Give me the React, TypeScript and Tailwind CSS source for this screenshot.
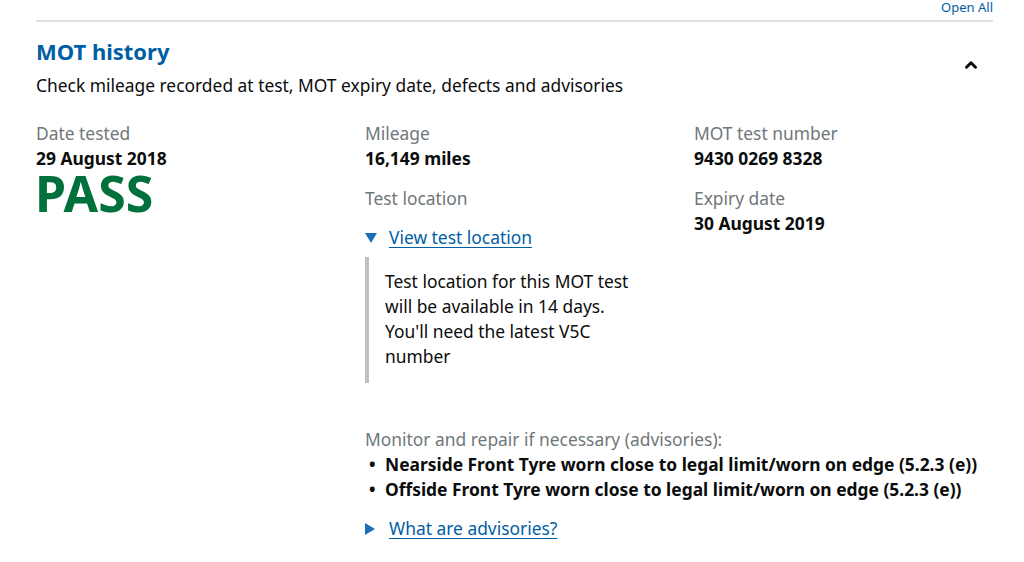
import { ChevronUp } from 'lucide-react';

const font = { fontFamily: '"Noto Sans", Arial, sans-serif' };

function Field({ label, value, className = '' }: { label: string; value: string; className?: string }) {
  return (
    <div className={className}>
      <p className="text-[17.4px] leading-[25px] text-[#6f777b]">{label}</p>
      <p className="text-[17.4px] leading-[25px] font-bold text-[#0b0c0c]">{value}</p>
    </div>
  );
}

export default function App() {
  return (
    <div className="min-h-screen bg-white text-[#0b0c0c]" style={font}>
      <div className="px-[36px] pr-[31px]">
        <div className="flex justify-end h-[22px] border-b-2 border-[#dee0e2]">
          <a className="text-[13px] leading-[14px] text-[#005ea5]">Open All</a>
        </div>

        <div className="flex items-start justify-between pt-[14px]">
          <div>
            <h2 className="text-[22px] leading-[30px] font-bold text-[#005ea5]">MOT history</h2>
            <p className="text-[17.4px] leading-[25px] mt-[7px]">
              Check mileage recorded at test, MOT expiry date, defects and advisories
            </p>
          </div>
          <ChevronUp className="w-[18px] h-[18px] mt-[20px] mr-[13px]" strokeWidth={4} />
        </div>

        <div className="grid grid-cols-[329px_329px_1fr] mt-[23px]">
          <div>
            <Field label="Date tested" value="29 August 2018" />
            <p className="text-[50px] leading-[44px] font-bold text-[#00703c] -ml-[1px]">PASS</p>
          </div>

          <div>
            <Field label="Mileage" value="16,149 miles" />
            <p className="text-[17.4px] leading-[25px] text-[#6f777b] mt-[15px]">Test location</p>
            <div className="flex items-center gap-[12px] mt-[14px]">
              <svg width="12" height="10" viewBox="0 0 12 10" className="shrink-0">
                <path d="M0 0 H12 L6 10 Z" fill="#1d70b8" />
              </svg>
              <a className="text-[17.4px] leading-[25px] text-[#005ea5] underline underline-offset-[3px]">View test location</a>
            </div>
            <div className="mt-[7px] border-l-[4px] border-[#bfc1c3] pl-[16px] pt-[12px] pb-[14px]">
              <p className="text-[17.4px] leading-[25px] w-[255px]">
                Test location for this MOT test will be available in 14 days. You'll need the latest V5C number
              </p>
            </div>

            <p className="text-[17.4px] leading-[25px] text-[#6f777b] mt-[44px] w-[640px]">
              Monitor and repair if necessary (advisories):
            </p>
            <ul className="w-[640px]">
              <li className="flex text-[17.4px] leading-[25px] font-bold">
                <span className="w-[20px] pl-[4px]">•</span>
                Nearside Front Tyre worn close to legal limit/worn on edge (5.2.3 (e))
              </li>
              <li className="flex text-[17.4px] leading-[25px] font-bold">
                <span className="w-[20px] pl-[4px]">•</span>
                Offside Front Tyre worn close to legal limit/worn on edge (5.2.3 (e))
              </li>
            </ul>
            <div className="flex items-center gap-[14px] mt-[14px]">
              <svg width="10" height="12" viewBox="0 0 10 12" className="shrink-0">
                <path d="M0 0 L10 6 L0 12 Z" fill="#1d70b8" />
              </svg>
              <a className="text-[17.4px] leading-[25px] text-[#005ea5] underline underline-offset-[3px]">What are advisories?</a>
            </div>
          </div>

          <div>
            <Field label="MOT test number" value="9430 0269 8328" />
            <Field label="Expiry date" value="30 August 2019" className="mt-[15px]" />
          </div>
        </div>
      </div>
    </div>
  );
}
